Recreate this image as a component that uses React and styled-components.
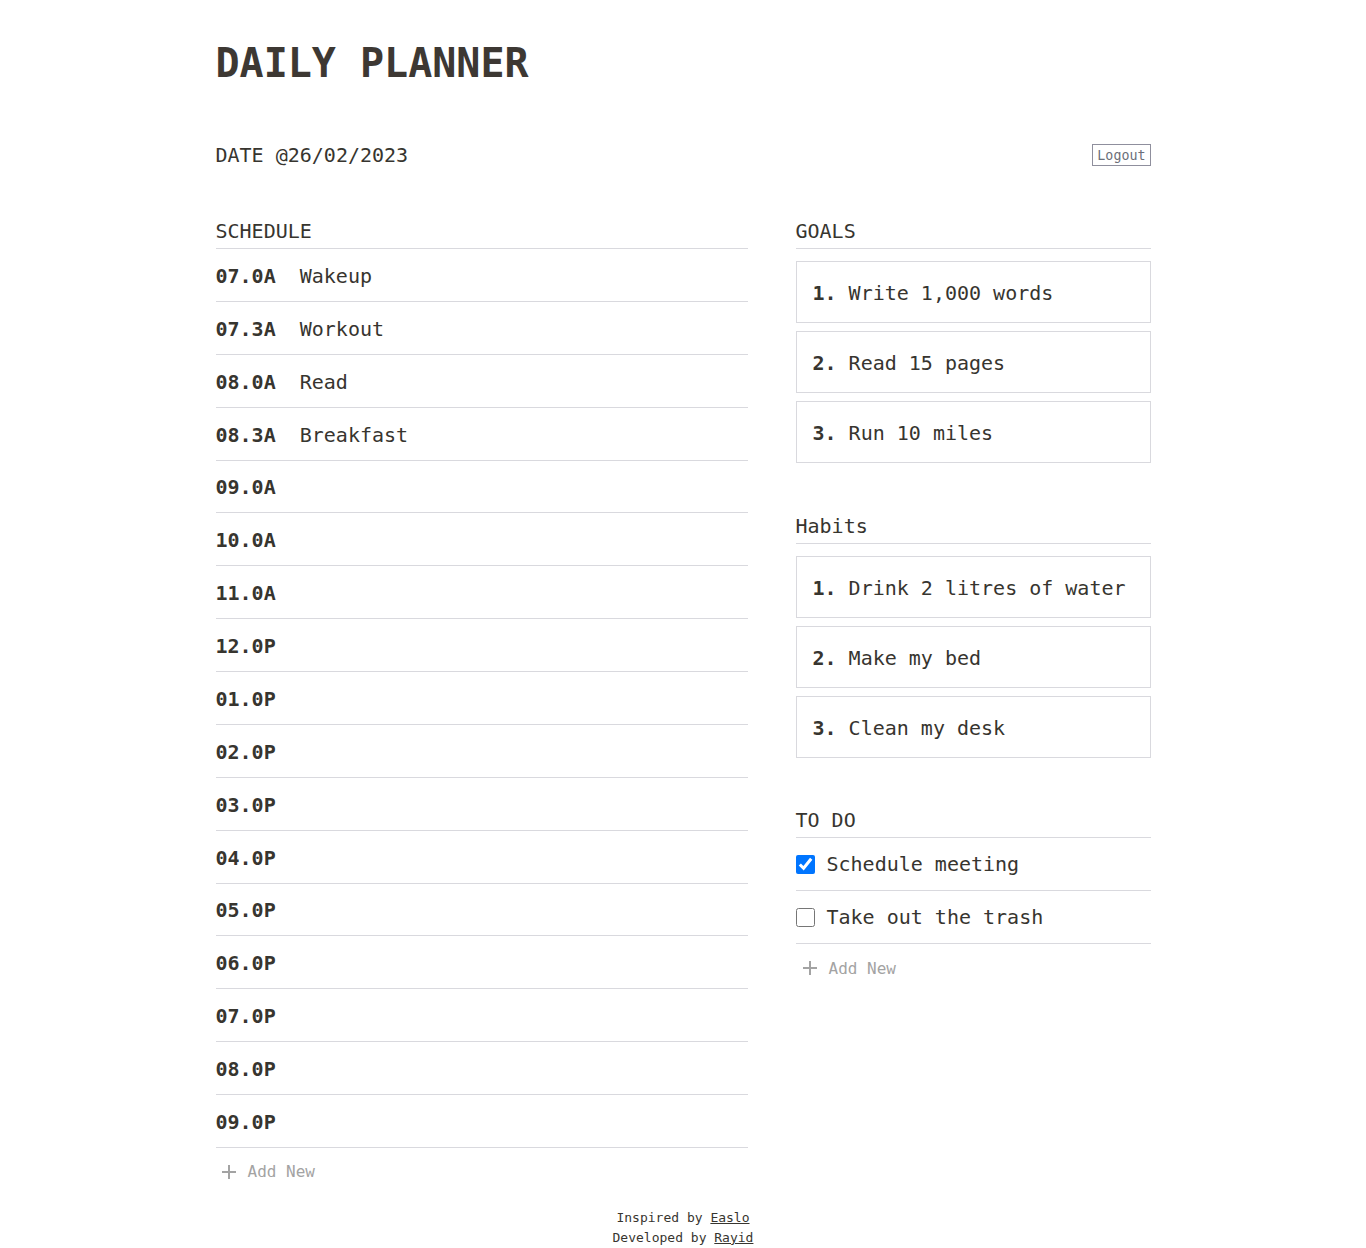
import React, { useState } from "react";
import styled, { createGlobalStyle } from "styled-components";

const GlobalStyle = createGlobalStyle`
  * { box-sizing: border-box; }
  body {
    margin: 0;
    background: #ffffff;
    color: #37352f;
    font-family: "DejaVu Sans Mono", "Liberation Mono", monospace;
  }
`;

const schedule = [
  ["07.0A", "Wakeup"],
  ["07.3A", "Workout"],
  ["08.0A", "Read"],
  ["08.3A", "Breakfast"],
  ["09.0A", ""],
  ["10.0A", ""],
  ["11.0A", ""],
  ["12.0P", ""],
  ["01.0P", ""],
  ["02.0P", ""],
  ["03.0P", ""],
  ["04.0P", ""],
  ["05.0P", ""],
  ["06.0P", ""],
  ["07.0P", ""],
  ["08.0P", ""],
  ["09.0P", ""],
];

const goals = ["Write 1,000 words", "Read 15 pages", "Run 10 miles"];
const habits = ["Drink 2 litres of water", "Make my bed", "Clean my desk"];

const PlusIcon = () => (
  <svg width="16" height="16" viewBox="0 0 16 16">
    <path d="M8 1v14M1 8h14" stroke="#a3a3a3" strokeWidth="2" fill="none" />
  </svg>
);

const App = () => {
  const [todos, setTodos] = useState([
    { text: "Schedule meeting", done: true },
    { text: "Take out the trash", done: false },
  ]);

  const toggle = (i) => {
    setTodos(todos.map((t, j) => (j === i ? { ...t, done: !t.done } : t)));
  };

  return (
    <>
      <GlobalStyle />
      <Page>
        <Title>DAILY PLANNER</Title>
        <DateRow>
          <DateText>DATE @26/02/2023</DateText>
          <LogoutBtn>Logout</LogoutBtn>
        </DateRow>

        <Columns>
          <div>
            <Heading>SCHEDULE</Heading>
            {schedule.map(([time, task]) => (
              <Row key={time}>
                <Time>{time}</Time>
                <span>{task}</span>
              </Row>
            ))}
            <AddNew>
              <PlusIcon />
              Add New
            </AddNew>
          </div>

          <div>
            <Section>
              <Heading>GOALS</Heading>
              <CardList>
                {goals.map((g, i) => (
                  <Card key={g}>
                    <Num>{i + 1}.</Num>
                    {g}
                  </Card>
                ))}
              </CardList>
            </Section>

            <Section $space={51}>
              <Heading>Habits</Heading>
              <CardList>
                {habits.map((h, i) => (
                  <Card key={h}>
                    <Num>{i + 1}.</Num>
                    {h}
                  </Card>
                ))}
              </CardList>
            </Section>

            <Section $space={50}>
              <Heading>TO DO</Heading>
              {todos.map((t, i) => (
                <TodoRow key={t.text}>
                  <Check
                    type="checkbox"
                    checked={t.done}
                    onChange={() => toggle(i)}
                  />
                  {t.text}
                </TodoRow>
              ))}
              <AddNew $right>
                <PlusIcon />
                Add New
              </AddNew>
            </Section>
          </div>
        </Columns>

        <Footer>
          <div>
            Inspired by <FootLink href="#">Easlo</FootLink>
          </div>
          <div>
            Developed by <FootLink href="#">Rayid</FootLink>
          </div>
        </Footer>
      </Page>
    </>
  );
};

export default App;

const Page = styled.div`
  width: 935px;
  margin: 0 auto;
  padding-top: 39px;
`;

const Title = styled.h1`
  margin: 0;
  font-size: 40px;
  line-height: 48px;
  font-weight: 700;
  color: #3d3833;
`;

const DateRow = styled.div`
  display: flex;
  justify-content: space-between;
  align-items: center;
  height: 24px;
  margin-top: 56px;
`;

const DateText = styled.span`
  font-size: 20px;
  line-height: 24px;
`;

const LogoutBtn = styled.button`
  font-family: inherit;
  font-size: 13.33px;
  height: 22px;
  padding: 0 4px;
  background: #ffffff;
  color: #6b6f7a;
  border: 1px solid #8f8f9d;
  border-radius: 0;
  cursor: pointer;
`;

const Columns = styled.div`
  display: grid;
  grid-template-columns: 532px 355px;
  column-gap: 48px;
  margin-top: 52px;
`;

const Heading = styled.h2`
  margin: 0;
  font-size: 20px;
  line-height: 24px;
  font-weight: 400;
  padding-bottom: 5px;
  border-bottom: 1px solid #d9d9de;
`;

const Row = styled.div`
  display: flex;
  align-items: center;
  gap: 24px;
  height: 52.88px;
  padding-top: 2px;
  font-size: 20px;
  border-bottom: 1px solid #d9d9de;
`;

const Time = styled.span`
  font-weight: 700;
`;

const AddNew = styled.div`
  display: flex;
  align-items: center;
  gap: 11px;
  height: 48px;
  padding-left: ${(p) => (p.$right ? "6px" : "5px")};
  font-size: 16px;
  color: #a3a3a3;
  cursor: pointer;
`;

const Section = styled.section`
  margin-top: ${(p) => p.$space || 0}px;
`;

const CardList = styled.div`
  display: flex;
  flex-direction: column;
  gap: 8px;
  margin-top: 12px;
`;

const Card = styled.div`
  display: flex;
  align-items: center;
  height: 62px;
  padding: 2px 16px 0;
  font-size: 20px;
  border: 1px solid #d9d9de;
`;

const Num = styled.span`
  font-weight: 700;
  margin-right: 12px;
`;

const TodoRow = styled.label`
  display: flex;
  align-items: center;
  gap: 12px;
  height: 53px;
  font-size: 20px;
  border-bottom: 1px solid #d9d9de;
  cursor: pointer;
`;

const Check = styled.input`
  width: 19px;
  height: 19px;
  margin: 0;
  accent-color: #0075ff;
`;

const Footer = styled.footer`
  margin-top: 12px;
  text-align: center;
  font-size: 13px;
  line-height: 20px;
  padding-bottom: 1px;
`;

const FootLink = styled.a`
  color: inherit;
`;
